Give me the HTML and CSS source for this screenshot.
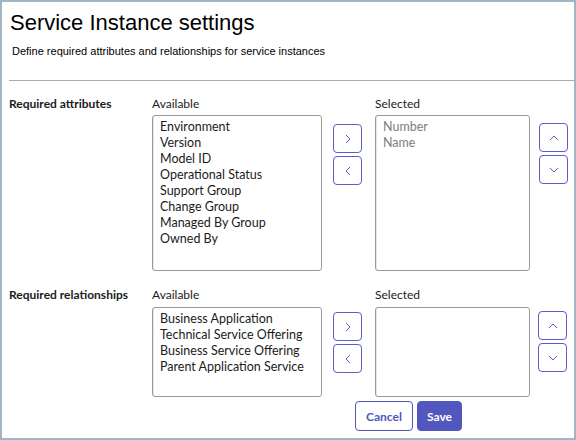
FILE: index.html
```html
<!DOCTYPE html>
<html lang="en">

<head>
    <meta charset="UTF-8">
    <meta name="viewport" content="width=device-width, initial-scale=1.0">
    <title>Service Instance settings</title>
    <link rel="stylesheet" href="styles.css">
</head>

<body>
    <div class="frame">
        <div class="header">
            <h1>Service Instance settings</h1>
            <p>Define required attributes and relationships for service instances</p>
        </div>

        <!-- Required attributes -->
        <div class="section">
            <div class="label">Required attributes</div>
            <div class="col-title">Available</div>
            <div></div>
            <div class="col-title">Selected</div>
            <div></div>

            <div></div>
            <div class="listbox tall">
                <div>Environment</div>
                <div>Version</div>
                <div>Model ID</div>
                <div>Operational Status</div>
                <div>Support Group</div>
                <div>Change Group</div>
                <div>Managed By Group</div>
                <div>Owned By</div>
            </div>
            <div class="btns first">
                <button class="icon-btn"><svg viewBox="0 0 16 16"><path d="M6 4l4 4-4 4"/></svg></button>
                <button class="icon-btn"><svg viewBox="0 0 16 16"><path d="M10 4l-4 4 4 4"/></svg></button>
            </div>
            <div class="listbox selected tall muted">
                <div>Number</div>
                <div>Name</div>
            </div>
            <div class="btns order first-order">
                <button class="icon-btn"><svg viewBox="0 0 16 16"><path d="M4 10l4-4 4 4"/></svg></button>
                <button class="icon-btn"><svg viewBox="0 0 16 16"><path d="M4 6l4 4 4-4"/></svg></button>
            </div>
        </div>

        <!-- Required relationships -->
        <div class="section second">
            <div class="label">Required relationships</div>
            <div class="col-title">Available</div>
            <div></div>
            <div class="col-title">Selected</div>
            <div></div>

            <div></div>
            <div class="listbox short">
                <div>Business Application</div>
                <div>Technical Service Offering</div>
                <div>Business Service Offering</div>
                <div>Parent Application Service</div>
            </div>
            <div class="btns">
                <button class="icon-btn"><svg viewBox="0 0 16 16"><path d="M6 4l4 4-4 4"/></svg></button>
                <button class="icon-btn"><svg viewBox="0 0 16 16"><path d="M10 4l-4 4 4 4"/></svg></button>
            </div>
            <div class="listbox selected short"></div>
            <div class="btns order">
                <button class="icon-btn"><svg viewBox="0 0 16 16"><path d="M4 10l4-4 4 4"/></svg></button>
                <button class="icon-btn"><svg viewBox="0 0 16 16"><path d="M4 6l4 4 4-4"/></svg></button>
            </div>
        </div>

        <div class="actions">
            <button class="btn-cancel">Cancel</button>
            <button class="btn-save">Save</button>
        </div>
    </div>
</body>

</html>
```

FILE: styles.css
```css
body {
    margin: 0;
    padding: 0;
    font-family: "Lato", "Liberation Sans", sans-serif;
    color: #1b1b1b;
    background-color: #fff;
}

.frame {
    width: 576px;
    height: 440px;
    box-sizing: border-box;
    border: 2px solid #9fb6c4;
    background-color: #fff;
}

.header {
    padding: 8px 0 0 1px;
    height: 70px;
    margin-left: 7px;
    border-bottom: 1px solid #ababab;
}

.header h1 {
    margin: 0;
    font-family: "Liberation Sans", Arial, sans-serif;
    font-weight: normal;
    font-size: 22px;
    line-height: 26px;
    color: #000;
}

.header p {
    margin: 8px 0 0 2px;
    font-family: "Liberation Sans", Arial, sans-serif;
    font-size: 11px;
    line-height: 14px;
    color: #000;
}

/* label | available | move buttons | selected | order buttons */
.section {
    display: grid;
    grid-template-columns: 143px 181px 42px 164px 30px;
    padding-left: 7px;
    margin-top: 15px;
}

.section.second {
    margin-top: 16px;
}

.label {
    font-weight: bold;
    font-size: 12px;
    line-height: 16px;
    white-space: nowrap;
}

.col-title {
    font-size: 12px;
    line-height: 16px;
    margin-bottom: 3px;
}

.section.second .col-title {
    margin-bottom: 4px;
}

.listbox {
    width: 170px;
    border: 1px solid #9a9a9a;
    border-radius: 3px;
    padding: 3px 7px;
    font-size: 12.5px;
    line-height: 16px;
    box-sizing: border-box;
    box-shadow: inset 1px 0 0 #e6e6e6;
}

.listbox.selected {
    width: 155px;
}

.listbox.tall {
    height: 156px;
}

.listbox.short {
    height: 90px;
}

.listbox.muted {
    color: #7d7d7d;
}

.btns {
    display: flex;
    flex-direction: column;
    gap: 3px;
    padding-top: 5px;
}

.section.second .btns.order {
    margin-left: -1px;
    padding-top: 4px;
}

.btns.first {
    padding-top: 9px;
}

.btns.first-order {
    padding-top: 8px;
}

.icon-btn {
    width: 29px;
    height: 29px;
    padding: 0;
    border: 1px solid #5a5ec6;
    border-radius: 4px;
    background-color: #fff;
    display: flex;
    align-items: center;
    justify-content: center;
}

.icon-btn svg {
    width: 16px;
    height: 16px;
    fill: none;
    stroke: #5a5ec6;
    stroke-width: 1;
}

.actions {
    display: flex;
    gap: 4px;
    padding-left: 353px;
    margin-top: 4px;
}

.actions button {
    height: 30px;
    border-radius: 4px;
    font-family: "Lato", sans-serif;
    font-weight: bold;
    font-size: 12px;
    padding: 0 8px;
}

.btn-cancel {
    width: 58px;
    border: 1px solid #5157be;
    background-color: #fff;
    color: #5157be;
}

.btn-save {
    width: 45px;
    border: 1px solid #5157be;
    background-color: #5157be;
    color: #fff;
}
```
